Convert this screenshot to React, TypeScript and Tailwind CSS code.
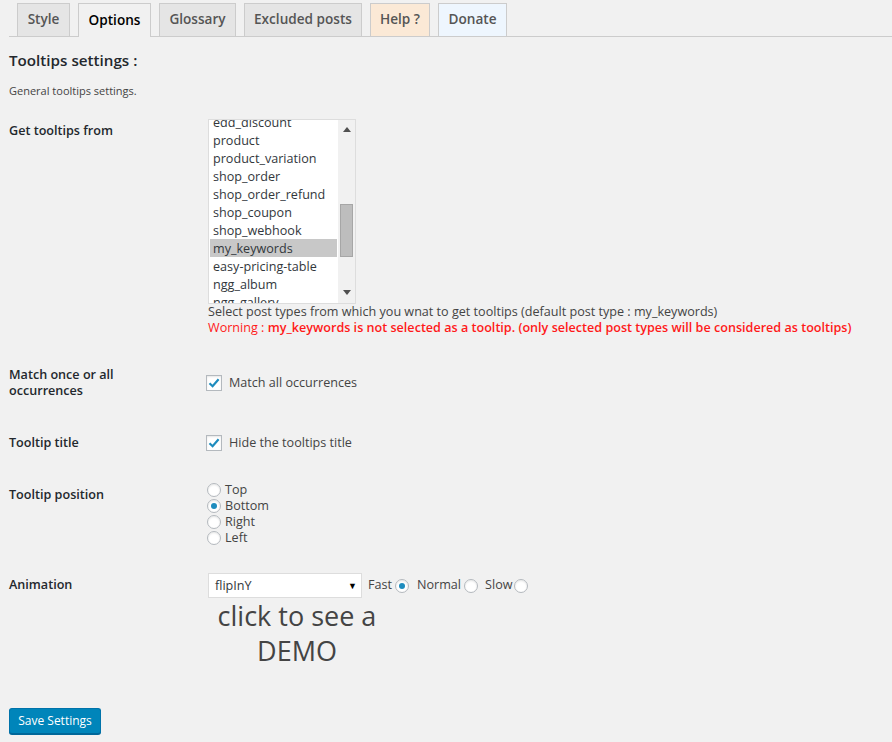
import React from "react";

const items = [
  "edd_discount",
  "product",
  "product_variation",
  "shop_order",
  "shop_order_refund",
  "shop_coupon",
  "shop_webhook",
  "my_keywords",
  "easy-pricing-table",
  "ngg_album",
  "ngg_gallery",
];

function Checkbox() {
  return (
    <span className="inline-flex h-[16px] w-[16px] items-center justify-center border border-[#b4b9be] bg-white shadow-[inset_0_1px_2px_rgba(0,0,0,0.1)]">
      <svg width="14" height="14" viewBox="0 0 14 14">
        <path d="M2.5 7.2 L5.6 10.2 L11.6 3.2" fill="none" stroke="#1e8cbe" strokeWidth="2.2" />
      </svg>
    </span>
  );
}

function Radio({ checked = false }: { checked?: boolean }) {
  return (
    <span className="inline-flex h-[14px] w-[14px] items-center justify-center rounded-full border border-[#b4b9be] bg-white shadow-[inset_0_1px_2px_rgba(0,0,0,0.1)]">
      {checked && <span className="h-[6px] w-[6px] rounded-full bg-[#1e8cbe]" />}
    </span>
  );
}

export default function App() {
  const tabs = [
    { label: "Style", w: "w-[53px]", cls: "bg-[#e5e5e5] text-[#555]" },
    { label: "Options", w: "w-[73px]", cls: "bg-[#f1f1f1] text-black h-[34px] mb-[-1px]" },
    { label: "Glossary", w: "w-[77px]", cls: "bg-[#e5e5e5] text-[#555]" },
    { label: "Excluded posts", w: "w-[118px]", cls: "bg-[#e5e5e5] text-[#555]" },
    { label: "Help ?", w: "w-[60px]", cls: "bg-[#fbe9d6] text-[#555]" },
    { label: "Donate", w: "w-[69px]", cls: "bg-[#eef6fe] text-[#555]" },
  ];
  return (
    <div className="min-h-[742px] bg-[#f1f1f1] font-['Open_Sans',sans-serif] text-[12.6px] text-[#444]">
      {/* Tabs */}
      <div className="ml-[9px] flex h-[37px] items-end gap-[8px] border-b border-[#ccc] pl-[8px]">
        {tabs.map((t) => (
          <div
            key={t.label}
            className={`flex h-[33px] items-center justify-center border border-b-0 border-[#ccc] pb-[2px] text-[13.6px] font-semibold leading-[24px] ${t.w} ${t.cls}`}
          >
            {t.label}
          </div>
        ))}
      </div>

      <div className="pl-[9px]">
        <h2 className="mt-[13px] text-[15.2px] font-semibold leading-[20px] text-[#23282d]">Tooltips settings :</h2>
        <p className="mt-[13px] text-[11px] leading-[16px] text-[#444]">General tooltips settings.</p>

        {/* Row 1 */}
        <div className="mt-[20px] flex">
          <div className="w-[199px] pt-[3px] text-[12.6px] font-semibold leading-[18px] text-[#23282d]">Get tooltips from</div>
          <div>
            <div className="flex h-[185px] w-[148px] border border-[#ddd] bg-white">
              <div className="relative w-[129px] overflow-hidden pl-[1px]">
                <div className="mt-[-7px]">
                  {items.map((it) => (
                    <div
                      key={it}
                      className={`h-[18px] w-[127px] pl-[3px] pt-[1px] text-[12.6px] leading-[17px] text-[#32373c] ${
                        it === "my_keywords" ? "bg-[#c8c8c8]" : ""
                      }`}
                    >
                      {it}
                    </div>
                  ))}
                </div>
              </div>
              <div className="flex w-[17px] flex-col items-center bg-[#f1f1f1]">
                <svg width="8" height="5" viewBox="0 0 8 5" className="mt-[7px]">
                  <path d="M4 0 L8 5 L0 5 Z" fill="#505050" />
                </svg>
                <div className="mt-[72px] h-[53px] w-[13px] border border-[#a6a6a6] bg-[#bdbdbd]" />
                <div className="flex-1" />
                <svg width="8" height="5" viewBox="0 0 8 5" className="mb-[8px]">
                  <path d="M0 0 L8 0 L4 5 Z" fill="#505050" />
                </svg>
              </div>
            </div>
            <div className="pt-[1px] mt-[-1px] leading-[16px]">
              Select post types from which you wnat to get tooltips (default post type : my_keywords)
            </div>
            <div className="leading-[16px] text-[#ff1a1a]">
              Worning : <span className="font-semibold">my_keywords is not selected as a tooltip. (only selected post types will be considered as tooltips)</span>
            </div>
          </div>
        </div>

        {/* Row 2 */}
        <div className="mt-[30px] flex">
          <div className="w-[197px] pr-[20px] pt-[1px] text-[12.6px] font-semibold leading-[16px] text-[#23282d]">
            Match once or all occurrences
          </div>
          <div className="flex items-center gap-[7px] pt-[1px] leading-[16px] self-center">
            <Checkbox />
            <span>Match all occurrences</span>
          </div>
        </div>

        {/* Row 3 */}
        <div className="mt-[36px] flex">
          <div className="w-[197px] text-[12.6px] font-semibold leading-[16px] text-[#23282d]">Tooltip title</div>
          <div className="flex items-center gap-[7px] leading-[16px]">
            <Checkbox />
            <span>Hide the tooltips title</span>
          </div>
        </div>

        {/* Row 4 */}
        <div className="mt-[31px] flex">
          <div className="w-[198px] pt-[5px] text-[12.6px] font-semibold leading-[16px] text-[#23282d]">Tooltip position</div>
          <div className="flex flex-col">
            {["Top", "Bottom", "Right", "Left"].map((p) => (
              <div key={p} className="flex h-[16px] items-center gap-[4px] leading-[16px]">
                <Radio checked={p === "Bottom"} />
                <span>{p}</span>
              </div>
            ))}
          </div>
        </div>

        {/* Row 5 */}
        <div className="mt-[27px] flex">
          <div className="w-[199px] pt-[4px] text-[12.6px] font-semibold leading-[16px] text-[#23282d]">Animation</div>
          <div>
            <div className="flex items-center">
              <div className="flex h-[25px] w-[154px] items-center justify-between border border-[#ddd] bg-white pl-[6px] pr-[4px] leading-[16px] text-[#32373c]">
                <span>flipInY</span>
                <span className="text-[9px] text-black">▼</span>
              </div>
              <span className="ml-[6px]">Fast</span>
              <span className="ml-[3px] inline-flex"><Radio checked /></span>
              <span className="ml-[8px]">Normal</span>
              <span className="ml-[3px] inline-flex"><Radio /></span>
              <span className="ml-[7px]">Slow</span>
              <span className="ml-[2px] inline-flex"><Radio /></span>
            </div>
            <div className="w-[178px] text-center text-[27px] leading-[35px] text-[#444]">click to see a DEMO</div>
          </div>
        </div>

        <button className="mt-[40px] h-[26px] w-[92px] rounded-[3px] border border-[#0073aa] border-b-[#006799] bg-[#0085ba] text-[12px] leading-[24px] text-white shadow-[0_1px_0_#006799]">
          Save Settings
        </button>
      </div>
    </div>
  );
}
